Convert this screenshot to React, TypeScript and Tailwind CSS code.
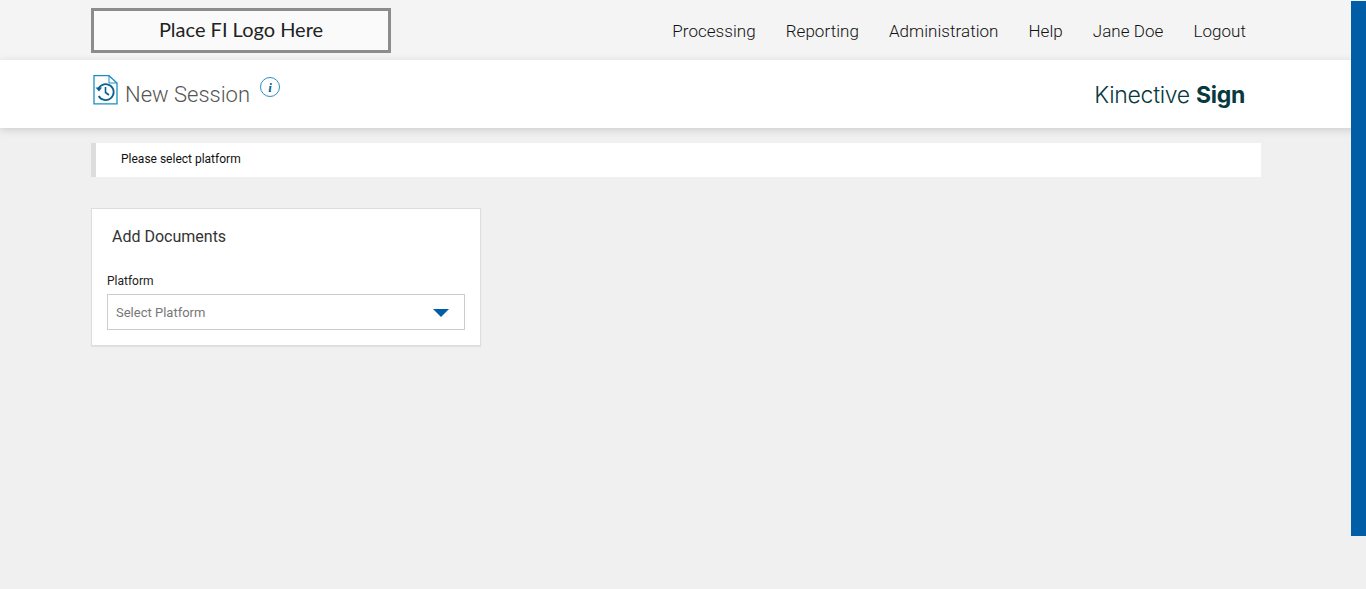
import React from 'react';

const NAV_ITEMS = ['Processing', 'Reporting', 'Administration', 'Help', 'Jane Doe', 'Logout'];

function SessionIcon() {
  return (
    <svg width="25" height="30" viewBox="0 0 25 30" fill="none" className="block">
      <path d="M1 0.7H16L24 8V28.8H1Z" stroke="#1a8fc4" strokeWidth="1.3" />
      <path d="M16 0.7V8H24" stroke="#1a8fc4" strokeWidth="1" />
      <path d="M5.5 13.5A8 8 0 1 1 5.7 21" stroke="#0b5f94" strokeWidth="1.8" />
      <path d="M2.5 12.5L6 16.5L9 12.5" fill="#0b5f94" />
      <path d="M12.5 12V17.5L16 20" stroke="#0b5f94" strokeWidth="1.6" />
    </svg>
  );
}

export default function App() {
  return (
    <div className="relative min-h-[589px] bg-[#f0f0f0] overflow-hidden font-['Roboto',sans-serif]">
      {/* Top nav */}
      <div className="h-[60px] bg-[#f4f4f4]">
        <div className="ml-[91px] w-[1170px] h-full flex items-start justify-between pr-[15px]">
          <div className="mt-2 w-[300px] h-[45px] pb-[4px] border-[3px] border-[#8c8c8c] bg-[#fafafa] flex items-center justify-center font-['Lato',sans-serif] text-[20px] font-normal text-[#222]">
            Place FI Logo Here
          </div>
          <nav className="flex gap-[30px] pt-[20px] text-[17px] leading-[22px] font-light tracking-[0.05px] text-[#111]">
            {NAV_ITEMS.map((item) => (
              <a key={item}>{item}</a>
            ))}
          </nav>
        </div>
      </div>

      {/* Title bar */}
      <div className="relative h-[68px] bg-white shadow-[0_2px_8px_rgba(0,0,0,0.15)]">
        <div className="ml-[91px] w-[1170px] h-full flex items-start justify-between pr-[16px]">
          <div className="flex items-start pl-[2px] pt-[15px]">
            <SessionIcon />
            <h1 className="ml-[7px] mt-[5px] text-[22px] leading-[30px] font-light text-[#555]">New Session</h1>
            <span className="ml-[10px] mt-[2px] w-[20px] h-[20px] rounded-full border border-[#2a8fc9] flex items-center justify-center font-['Liberation_Serif',serif] italic font-bold text-[13px] leading-none text-[#0b5f94]">
              i
            </span>
          </div>
          <div className="pt-[20px] font-['Inter',sans-serif] text-[23px] leading-[30px] font-light text-[#07393f] tracking-[-0.3px]">
            Kinective <span className="font-bold">Sign</span>
          </div>
        </div>
      </div>

      <div className="ml-[91px] w-[1170px] pt-[15px]">
        {/* Notice */}
        <div className="h-[34px] bg-white border-l-[5px] border-[#dddddd] pl-[25px] pb-[2px] flex items-center text-[12px] text-[#111]">
          Please select platform
        </div>

        {/* Card */}
        <div className="mt-[31px] w-[390px] h-[138px] bg-white border border-[#dddddd] shadow-[0_1px_1px_rgba(0,0,0,0.05)] px-[15px]">
          <h2 className="pl-[5px] pt-[18px] text-[16px] leading-[20px] text-[#333]">Add Documents</h2>
          <label className="block mt-[26px] text-[12px] leading-[16px] text-[#222]">Platform</label>
          <div className="mt-[5px] h-[36px] border border-[#cccccc] flex items-center justify-between pl-[8px] pr-[15px] pt-[1px] text-[13px] text-[#777]">
            <span>Select Platform</span>
            <span className="w-0 h-0 border-x-[8px] border-x-transparent border-t-[8px] border-t-[#005da6]" />
          </div>
        </div>
      </div>

      {/* Blue rail lying over the right edge */}
      <div className="absolute right-0 top-[1px] w-[15px] h-[535px] bg-[#005da6]" />
    </div>
  );
}
